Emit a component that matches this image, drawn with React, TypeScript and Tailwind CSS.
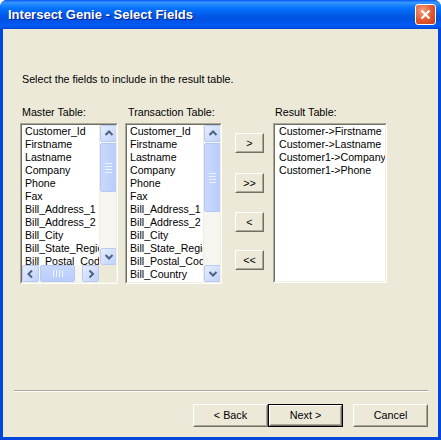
import React from "react";

const masterFields = [
  "Customer_Id",
  "Firstname",
  "Lastname",
  "Company",
  "Phone",
  "Fax",
  "Bill_Address_1",
  "Bill_Address_2",
  "Bill_City",
  "Bill_State_Region",
  "Bill_Postal_Code",
  "Bill_Country",
];

const resultFields = [
  "Customer->Firstname",
  "Customer->Lastname",
  "Customer1->Company",
  "Customer1->Phone",
];

function Arrow({ dir }: { dir: "up" | "down" | "left" | "right" }) {
  const d = {
    up: "M1.5 6 L5 2.5 L8.5 6",
    down: "M1.5 3 L5 6.5 L8.5 3",
    left: "M6 1.5 L2.5 5 L6 8.5",
    right: "M3.5 1.5 L7 5 L3.5 8.5",
  }[dir];
  return (
    <svg width="10" height="10" viewBox="0 0 10 10">
      <path d={d} fill="none" stroke="#4d6185" strokeWidth="2" />
    </svg>
  );
}

function ScrollBtn({ dir }: { dir: "up" | "down" | "left" | "right" }) {
  return (
    <div className="w-[17px] h-[17px] shrink-0 flex items-center justify-center rounded-[2px] border border-[#b9cbf3] bg-[linear-gradient(135deg,#e6eefd,#c0d2fb)]">
      <Arrow dir={dir} />
    </div>
  );
}

function VScroll({ thumbTop, thumbHeight }: { thumbTop: number; thumbHeight: number }) {
  return (
    <div className="w-[17px] h-full flex flex-col bg-[#f6f5f0] border-l border-[#eeede5]">
      <ScrollBtn dir="up" />
      <div
        className="w-[17px] shrink-0 rounded-[2px] border border-[#b4c8f6] bg-[linear-gradient(90deg,#c9d8fc,#b9cdfb)] flex flex-col items-center justify-center gap-[2px]"
        style={{ marginTop: thumbTop, height: thumbHeight }}
      >
        <div className="w-[7px] h-px bg-[#eef3fe]" />
        <div className="w-[7px] h-px bg-[#eef3fe]" />
        <div className="w-[7px] h-px bg-[#eef3fe]" />
        <div className="w-[7px] h-px bg-[#eef3fe]" />
      </div>
      <div className="flex-1" />
      <ScrollBtn dir="down" />
    </div>
  );
}

function HScroll() {
  return (
    <div className="h-[17px] flex flex-row bg-[#f6f5f0]">
      <ScrollBtn dir="left" />
      <div className="ml-[1px] w-[35px] h-[17px] rounded-[2px] border border-[#b4c8f6] bg-[linear-gradient(180deg,#c9d8fc,#b9cdfb)] flex items-center justify-center gap-[2px]">
        <div className="w-px h-[7px] bg-[#eef3fe]" />
        <div className="w-px h-[7px] bg-[#eef3fe]" />
        <div className="w-px h-[7px] bg-[#eef3fe]" />
        <div className="w-px h-[7px] bg-[#eef3fe]" />
      </div>
      <div className="flex-1" />
      <ScrollBtn dir="right" />
    </div>
  );
}

function Sunken({ className, children }: { className: string; children: React.ReactNode }) {
  return (
    <div className={`border border-t-[#aca899] border-l-[#aca899] border-r-white border-b-white ${className}`}>
      <div className="w-full h-full border border-t-[#716f64] border-l-[#716f64] border-r-[#f1efe2] border-b-[#f1efe2] bg-white overflow-hidden">
        {children}
      </div>
    </div>
  );
}

function Items({ items }: { items: string[] }) {
  return (
    <div className="pl-[3px] whitespace-nowrap overflow-hidden">
      {items.map((f) => (
        <div key={f} className="h-[13px] leading-[13px] text-[10.6px] text-black">
          {f}
        </div>
      ))}
    </div>
  );
}

function ClassicBtn({ label, className = "", def = false }: { label: string; className?: string; def?: boolean }) {
  return (
    <div className={`${def ? "border border-black" : ""} ${className}`}>
      <div className="w-full h-full border border-t-white border-l-white border-r-[#716f64] border-b-[#716f64] bg-[#ece9d8]">
        <div className="w-full h-full border border-t-[#ece9d8] border-l-[#ece9d8] border-r-[#aca899] border-b-[#aca899] flex items-center justify-center text-[10.8px] text-black">
          {label}
        </div>
      </div>
    </div>
  );
}

export default function App() {
  return (
    <div className="w-[441px] h-[440px] flex flex-col bg-[#0047db] rounded-t-[7px] overflow-hidden font-['Liberation_Sans',Arial,sans-serif] select-none">
      {/* Title bar */}
      <div className="h-[29px] shrink-0 flex items-center pl-[8px] pr-[4px] bg-[linear-gradient(180deg,#0058ee_0%,#3a93ff_8%,#288eff_14%,#127dff_22%,#036ffc_32%,#0262ee_45%,#0057e5_55%,#0054e3_65%,#0055eb_78%,#005bf5_90%,#0046d0_100%)]">
        <span className="flex-1 text-white font-bold text-[13px] [text-shadow:1px_1px_#0a1e8c]">
          Intersect Genie - Select Fields
        </span>
        <div className="w-[21px] h-[21px] rounded-[3px] border border-white bg-[radial-gradient(circle_at_35%_30%,#f5a07e,#e0562d_55%,#c2411a)] flex items-center justify-center mr-[1px]">
          <svg width="11" height="11" viewBox="0 0 11 11">
            <path d="M1.5 1.5 L9.5 9.5 M9.5 1.5 L1.5 9.5" stroke="white" strokeWidth="2.2" />
          </svg>
        </div>
      </div>

      {/* Client area */}
      <div className="flex-1 mx-[3px] mb-[3px] bg-[#ece9d8] flex flex-col text-[10.7px] text-black">
        <div className="mt-[44px] ml-[19px] h-[13px] leading-[13px]">
          Select the fields to include in the result table.
        </div>

        <div className="mt-[20px] ml-[17px] flex flex-row items-start">
          {/* Master */}
          <div className="flex flex-col">
            <div className="ml-[2px] h-[13px] leading-[13px]">Master Table:</div>
            <Sunken className="mt-[4px] w-[98px] h-[161px]">
              <div className="flex flex-col h-full">
                <div className="flex flex-row flex-1 min-h-0">
                  <div className="flex-1 min-w-0">
                    <Items items={masterFields.slice(0, 11)} />
                  </div>
                  <VScroll thumbTop={1} thumbHeight={49} />
                </div>
                <div className="flex flex-row">
                  <div className="flex-1">
                    <HScroll />
                  </div>
                  <div className="w-[17px] h-[17px] bg-[#ece9d8]" />
                </div>
              </div>
            </Sunken>
          </div>

          {/* Transaction */}
          <div className="ml-[7px] flex flex-col">
            <div className="ml-[3px] h-[13px] leading-[13px]">Transaction Table:</div>
            <Sunken className="mt-[4px] w-[97px] h-[161px]">
              <div className="flex flex-row h-full">
                <div className="flex-1 min-w-0">
                  <Items items={masterFields} />
                </div>
                <VScroll thumbTop={1} thumbHeight={69} />
              </div>
            </Sunken>
          </div>

          {/* Move buttons */}
          <div className="ml-[13px] mt-[27px] flex flex-col">
            <ClassicBtn label=">" className="w-[29px] h-[20px]" />
            <ClassicBtn label=">>" className="mt-[20px] w-[29px] h-[20px]" />
            <ClassicBtn label="<" className="mt-[19px] w-[29px] h-[20px]" />
            <ClassicBtn label="<<" className="mt-[18px] w-[29px] h-[20px]" />
          </div>

          {/* Result */}
          <div className="ml-[9px] flex flex-col">
            <div className="ml-[2px] h-[13px] leading-[13px]">Result Table:</div>
            <Sunken className="mt-[4px] w-[114px] h-[160px]">
              <div className="pl-[1px]">
                <Items items={resultFields} />
              </div>
            </Sunken>
          </div>
        </div>

        <div className="flex-1" />

        {/* Separator */}
        <div className="ml-[11px] mr-[10px] h-px bg-[#aca899]" />
        <div className="ml-[11px] mr-[10px] h-px bg-white" />

        {/* Bottom buttons */}
        <div className="mt-[12px] mb-[10px] mr-[10px] flex flex-row justify-end">
          <ClassicBtn label="< Back" className="w-[75px] h-[23px]" />
          <ClassicBtn label="Next >" def className="w-[75px] h-[23px]" />
          <ClassicBtn label="Cancel" className="ml-[10px] w-[75px] h-[23px]" />
        </div>
      </div>
    </div>
  );
}
